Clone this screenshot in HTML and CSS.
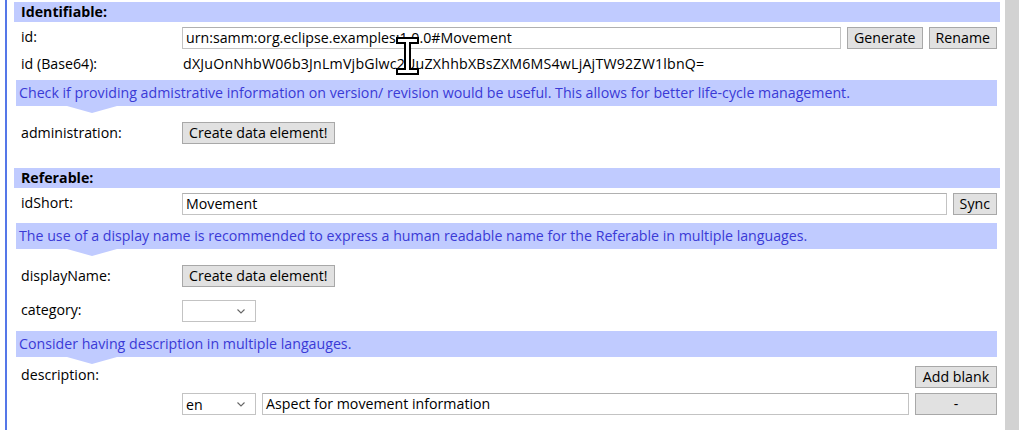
FILE: index.html
```html
<!DOCTYPE html>
<html>
<head>
<meta charset="utf-8">
<link rel="stylesheet" href="styles.css">
</head>
<body>
<div class="page">
  <div class="rail"></div>
  <div class="content">
    <div class="head">Identifiable:</div>
    <div class="row r-id">
      <div class="label">id:</div>
      <div class="ctrl">
        <div class="input grow">urn:samm:org.eclipse.examples:1.0.0#Movement</div>
        <div class="btn">Generate</div>
        <div class="btn">Rename</div>
      </div>
    </div>
    <div class="row r-b64">
      <div class="label">id (Base64):</div>
      <div class="value">dXJuOnNhbW06b3JnLmVjbGlwc2UuZXhhbXBsZXM6MS4wLjAjTW92ZW1lbnQ=</div>
    </div>
    <div class="hint">Check if providing admistrative information on version/ revision would be useful. This allows for better life-cycle management.</div>
    <div class="row r-admin">
      <div class="label">administration:</div>
      <div class="ctrl"><div class="btn">Create data element!</div></div>
    </div>

    <div class="head head2">Referable:</div>
    <div class="row r-idshort">
      <div class="label">idShort:</div>
      <div class="ctrl">
        <div class="input grow">Movement</div>
        <div class="btn">Sync</div>
      </div>
    </div>
    <div class="hint hint2">The use of a display name is recommended to express a human readable name for the Referable in multiple languages.</div>
    <div class="row r-disp">
      <div class="label">displayName:</div>
      <div class="ctrl"><div class="btn">Create data element!</div></div>
    </div>
    <div class="row r-cat">
      <div class="label">category:</div>
      <div class="ctrl"><div class="select"><span></span><svg class="chev" width="8" height="5" viewBox="0 0 8 5"><path d="M0.5 0.5 L4 4 L7.5 0.5" fill="none" stroke="#666" stroke-width="1.1"/></svg></div></div>
    </div>
    <div class="hint hint3">Consider having description in multiple langauges.</div>
    <div class="row r-desc">
      <div class="label">description:</div>
      <div class="ctrl end"><div class="btn wide">Add blank</div></div>
    </div>
    <div class="row r-lang">
      <div class="label"></div>
      <div class="ctrl">
        <div class="select"><span>en</span><svg class="chev" width="8" height="5" viewBox="0 0 8 5"><path d="M0.5 0.5 L4 4 L7.5 0.5" fill="none" stroke="#666" stroke-width="1.1"/></svg></div>
        <div class="input grow">Aspect for movement information</div>
        <div class="btn wide">-</div>
      </div>
    </div>
  </div>
  <div class="scroll"></div>
</div>
<svg class="cursor" width="23" height="38" viewBox="0 0 23 38">
  <path d="M1 1 H22 V6 H14 V32 H22 V37 H1 V32 H9 V6 H1 Z" fill="#fff" stroke="#000" stroke-width="2"/>
</svg>
</body>
</html>
```
FILE: styles.css
```css
* { box-sizing: border-box; }
html, body { margin: 0; padding: 0; background: #fff; }
body {
  font-family: "Open Sans", "Noto Sans", sans-serif;
  font-size: 14.2px;
  color: #000;
  position: relative;
  width: 1019px;
  height: 430px;
  overflow: hidden;
}
.page { display: flex; height: 430px; }
.rail { width: 2px; margin-left: 5px; background: #5577e8; flex: none; }
.content { width: 986px; margin-left: 7px; padding-top: 2px; flex: none; }
.scroll { width: 14px; margin-left: 5px; background: #d2d2d2; flex: none; }

.head {
  height: 20px;
  background: #c0cbff;
  font-weight: bold;
  padding-left: 7px;
  line-height: 20px;
}
.head2 { margin-top: 24px; }

.row { display: grid; grid-template-columns: 168px 1fr; height: 22px; }
.label { padding-left: 7px; line-height: 18px; padding-top: 1px; }
.ctrl { display: flex; gap: 6px; padding-right: 3px; }
.ctrl.end { justify-content: flex-end; }
.grow { flex: 1; }

.input {
  height: 22px;
  border: 1px solid #c3c3c3;
  border-top-color: #b0b0b0;
  background: #fff;
  padding-left: 3px;
  line-height: 20px;
  white-space: nowrap;
  overflow: hidden;
}
.btn {
  height: 22px;
  border: 1px solid #a8a8a8;
  background: #e1e1e1;
  padding: 0 6px;
  line-height: 20px;
  white-space: nowrap;
}
.btn.wide { width: 82px; text-align: center; }
.select {
  width: 74px;
  height: 22px;
  border: 1px solid #c3c3c3;
  background: #fff;
  display: flex;
  align-items: center;
  justify-content: space-between;
  padding: 0 10px 0 3px;
}
.chev { flex: none; }

.r-id { margin-top: 5px; }
.r-b64 { margin-top: 4px; }
.r-b64 .label, .value { line-height: 22px; padding-top: 0; }
.value { padding-left: 1px; letter-spacing: 0.2px; }

.hint {
  position: relative;
  margin: 5px 3px 0 2px;
  height: 26px;
  background: #c0cbff;
  color: #3a3ad6;
  padding-left: 3px;
  line-height: 26px;
  white-space: nowrap;
}
.hint::after {
  content: "";
  position: absolute;
  left: 51px;
  top: 26px;
  border-left: 25px solid transparent;
  border-right: 25px solid transparent;
  border-top: 7px solid #c0cbff;
}
.r-admin { margin-top: 16px; }
.r-admin .label, .r-disp .label { padding-top: 2px; }
.r-idshort { margin-top: 5px; }
.hint2 { margin-top: 8px; }
.r-disp { margin-top: 16px; }
.r-cat { margin-top: 13px; }
.hint3 { margin-top: 9px; }
.r-desc { margin-top: 9px; }
.r-desc .label { padding-top: 0; }
.r-lang { margin-top: 5px; }

.cursor { position: absolute; left: 396px; top: 37px; }
```
